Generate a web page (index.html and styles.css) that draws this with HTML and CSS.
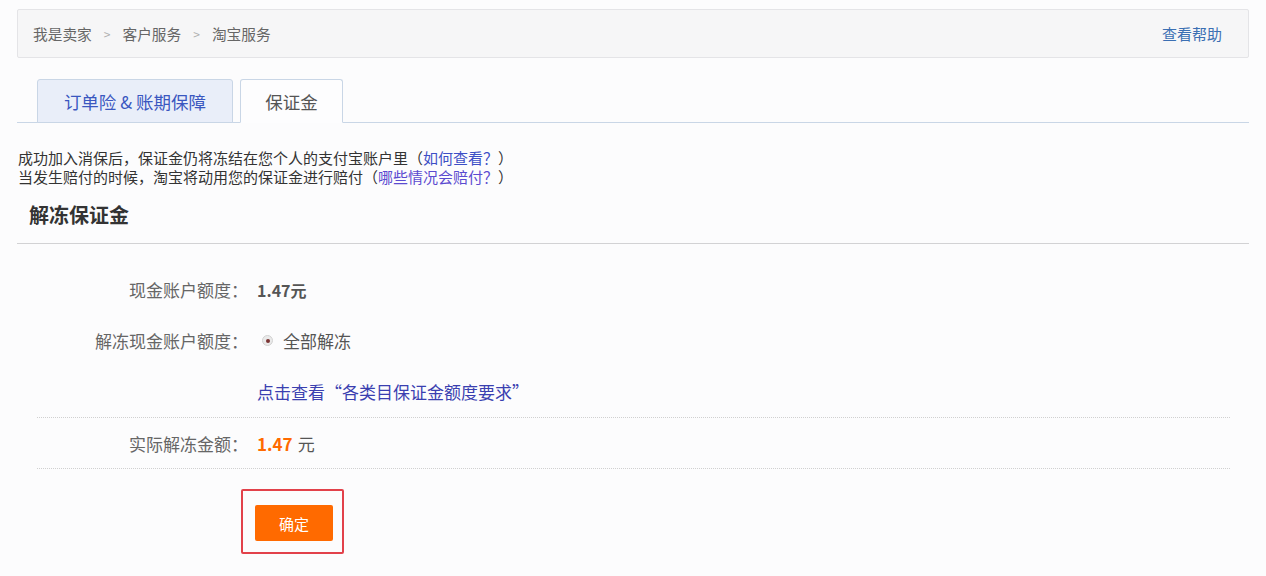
FILE: index.html
```html
<!DOCTYPE html>
<html lang="zh-CN">
<head>
<meta charset="utf-8">
<title>解冻保证金</title>
<link rel="stylesheet" href="styles.css">
</head>
<body>
<div class="page">
  <div class="crumb">
    <div class="crumb-path">
      <span>我是卖家</span><span class="sep">&gt;</span><span>客户服务</span><span class="sep">&gt;</span><span>淘宝服务</span>
    </div>
    <a class="crumb-help" href="#">查看帮助</a>
  </div>

  <div class="tabs">
    <div class="tab tab-other">订单险 &amp; 账期保障</div>
    <div class="tab tab-active">保证金</div>
  </div>

  <div class="intro">
    <p>成功加入消保后，保证金仍将冻结在您个人的支付宝账户里（<a class="lnk" href="#">如何查看？</a>）</p>
    <p>当发生赔付的时候，淘宝将动用您的保证金进行赔付（<a class="lnk lnk-visited" href="#">哪些情况会赔付？</a>）</p>
  </div>

  <h2 class="title">解冻保证金</h2>

  <div class="form">
    <div class="row">
      <div class="label">现金账户额度：</div>
      <div class="value amount">1.47元</div>
    </div>
    <div class="row">
      <div class="label">解冻现金账户额度：</div>
      <div class="value"><span class="radio"><span class="dot"></span></span>全部解冻</div>
    </div>
    <div class="row row-link">
      <div class="label"></div>
      <div class="value"><a class="lnk-req" href="#">点击查看“各类目保证金额度要求”</a></div>
    </div>
    <div class="summary">
      <div class="row row-sum">
        <div class="label">实际解冻金额：</div>
        <div class="value"><span class="total">1.47</span> 元</div>
      </div>
    </div>
    <div class="actions">
      <div class="highlight">
        <button class="btn" type="button">确定</button>
      </div>
    </div>
  </div>
</div>
</body>
</html>
```

FILE: styles.css
```css
html, body {
  margin: 0;
  padding: 0;
  background: #fcfcfd;
}
body {
  font-family: "Noto Sans CJK SC", "Noto Sans", sans-serif;
  color: #333;
}
.page {
  padding: 9px 17px 0 17px;
}

/* breadcrumb */
.crumb {
  height: 47px;
  border: 1px solid #e4e4e7;
  border-radius: 2px;
  background: #f6f6f7;
  display: flex;
  align-items: center;
  justify-content: space-between;
  padding: 0 26px 0 15px;
  font-size: 14.7px;
  color: #666;
}
.crumb-path {
  display: flex;
  align-items: center;
}
.sep {
  color: #b0b0b0;
  margin: 0 12px;
  font-size: 12px;
}
.crumb-help {
  color: #3b6fb3;
  text-decoration: none;
  font-size: 15px;
}

/* tabs */
.tabs {
  margin-top: 21px;
  display: flex;
  align-items: flex-end;
  gap: 7px;
  padding-left: 20px;
  border-bottom: 1px solid #c9d6e6;
}
.tab {
  margin-bottom: -1px;
  display: flex;
  align-items: center;
  justify-content: center;
  font-size: 17.5px;
  border: 1px solid #c9d6e6;
  border-radius: 3px 3px 0 0;
  box-sizing: border-box;
  height: 44px;
}
.tab-other {
  width: 196px;
  background: #e9eef9;
  color: #3a57c0;
}
.tab-active {
  width: 103px;
  background: #fdfdfe;
  border-bottom-color: #fdfdfe;
  color: #555;
}

/* intro */
.intro {
  margin-top: 25px;
  padding-left: 1px;
  font-size: 15px;
  line-height: 19px;
  color: #333;
}
.intro p {
  margin: 0;
}
.lnk {
  color: #3d4fc6;
  text-decoration: none;
}
.lnk-visited {
  color: #5b4bd0;
}

/* heading */
.title {
  margin: 16px 0 0 0;
  padding: 0 0 15px 12px;
  font-size: 20px;
  line-height: 26px;
  font-weight: bold;
  color: #333;
  border-bottom: 1px solid #d2d2d4;
}

/* form */
.form {
  padding-top: 20px;
}
.row {
  display: grid;
  grid-template-columns: 231px 1fr;
  column-gap: 9px;
  align-items: center;
  height: 51px;
  font-size: 17px;
  color: #666;
}
.label {
  text-align: right;
  color: #666;
}
.value {
  display: flex;
  align-items: center;
  color: #555;
}
.amount {
  font-weight: bold;
  font-size: 16px;
  color: #555;
}
.radio {
  width: 11px;
  height: 11px;
  border-radius: 50%;
  background: #eaeaea;
  border: 1px solid #d2d2d2;
  box-sizing: border-box;
  display: inline-flex;
  align-items: center;
  justify-content: center;
  margin: 0 10px 0 5px;
}
.dot {
  width: 4px;
  height: 4px;
  border-radius: 50%;
  background: #7b3434;
}
.lnk-req {
  color: #3a3fb0;
  text-decoration: none;
}
.summary {
  margin: 0 19px 0 20px;
  border-top: 1px dotted #d0d0d0;
  border-bottom: 1px dotted #d0d0d0;
}
.row-sum {
  grid-template-columns: 211px 1fr;
  height: 50px;
}
.total {
  color: #ff6a00;
  font-weight: bold;
  font-size: 17px;
  margin-right: 5px;
}
.actions {
  padding: 20px 0 0 224px;
}
.highlight {
  display: inline-block;
  border: 2px solid #e2414a;
  padding: 14px 9px 11px 12px;
  border-radius: 2px;
}
.btn {
  display: block;
  width: 78px;
  height: 36px;
  border: none;
  border-radius: 2px;
  background: #ff6a00;
  color: #fff;
  font-family: "Noto Sans CJK SC", sans-serif;
  font-size: 15px;
  padding: 0;
}
```
